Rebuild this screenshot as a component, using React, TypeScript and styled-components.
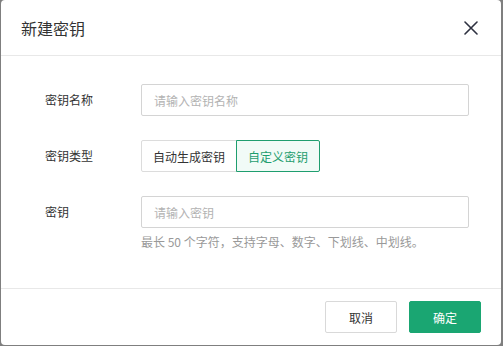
import styled, { createGlobalStyle } from 'styled-components'

const GlobalStyle = createGlobalStyle`
  html, body {
    margin: 0;
    padding: 0;
    background: #7f7f7f;
    font-family: "Noto Sans CJK SC", "Noto Sans", sans-serif;
  }
  * {
    box-sizing: border-box;
  }
`

const Backdrop = styled.div`
  width: 503px;
  height: 346px;
  padding-left: 1px;
  overflow: hidden;
`

const Modal = styled.div`
  width: 500px;
  height: 345px;
  background: #fff;
  border-radius: 4px;
  display: flex;
  flex-direction: column;
`

const Header = styled.div`
  height: 57px;
  padding: 0 20px;
  border-bottom: 1px solid #e8e8e8;
  display: flex;
  align-items: center;
  justify-content: space-between;
`

const Title = styled.h2`
  margin: 0;
  font-size: 16px;
  font-weight: 400;
  color: #333;
`

const CloseButton = styled.button`
  width: 16px;
  height: 16px;
  padding: 0;
  margin-right: 2px;
  border: none;
  background: none;
  display: flex;
  align-items: center;
  justify-content: center;
  cursor: pointer;
`

const Body = styled.div`
  padding: 28px 32px 38px 44px;
  display: flex;
  flex-direction: column;
  gap: 24px;
`

const Row = styled.div`
  display: flex;
  align-items: flex-start;
`

const Label = styled.div`
  width: 96px;
  height: 32px;
  line-height: 32px;
  font-size: 12px;
  color: #333;
`

const Field = styled.div`
  flex: 1;
  display: flex;
  flex-direction: column;
`

const Input = styled.input`
  width: 100%;
  height: 32px;
  padding: 0 12px;
  border: 1px solid #d4d4d4;
  border-radius: 2px;
  font-family: inherit;
  font-size: 12px;
  color: #333;
  outline: none;

  &::placeholder {
    color: #b3b3b3;
  }
`

const Hint = styled.div`
  margin-top: 6px;
  font-size: 12px;
  line-height: 16px;
  color: #999;
`

const Segmented = styled.div`
  display: flex;
`

const SegmentButton = styled.button<{ $active?: boolean }>`
  height: 32px;
  padding: 0 11px;
  font-family: inherit;
  font-size: 12px;
  border: 1px solid ${(p) => (p.$active ? '#1f9e6f' : '#dcdcdc')};
  background: ${(p) => (p.$active ? '#f1fbf7' : '#fff')};
  color: ${(p) => (p.$active ? '#1f9e6f' : '#333')};
  position: relative;
  z-index: ${(p) => (p.$active ? 1 : 0)};
  cursor: pointer;

  &:first-child {
    border-radius: 2px 0 0 2px;
  }

  &:last-child {
    margin-left: -1px;
    border-radius: 0 2px 2px 0;
  }
`

const Footer = styled.div`
  border-top: 1px solid #e8e8e8;
  padding: 12px 20px;
  display: flex;
  justify-content: flex-end;
  gap: 12px;
`

const FooterButton = styled.button<{ $primary?: boolean }>`
  width: 72px;
  height: 32px;
  border-radius: 2px;
  font-family: inherit;
  font-size: 12px;
  border: 1px solid ${(p) => (p.$primary ? '#1aa672' : '#d9d9d9')};
  background: ${(p) => (p.$primary ? '#1aa672' : '#fff')};
  color: ${(p) => (p.$primary ? '#fff' : '#333')};
  cursor: pointer;
`

const CloseIcon = () => (
  <svg width="14" height="14" viewBox="0 0 14 14">
    <path
      d="M1 1L13 13M13 1L1 13"
      stroke="#2e3140"
      strokeWidth="1.6"
      strokeLinecap="round"
    />
  </svg>
)

export default function App() {
  return (
    <>
      <GlobalStyle />
      <Backdrop>
        <Modal>
          <Header>
            <Title>新建密钥</Title>
            <CloseButton aria-label="关闭">
              <CloseIcon />
            </CloseButton>
          </Header>
          <Body>
            <Row>
              <Label>密钥名称</Label>
              <Field>
                <Input placeholder="请输入密钥名称" />
              </Field>
            </Row>
            <Row>
              <Label>密钥类型</Label>
              <Segmented>
                <SegmentButton>自动生成密钥</SegmentButton>
                <SegmentButton $active>自定义密钥</SegmentButton>
              </Segmented>
            </Row>
            <Row>
              <Label>密钥</Label>
              <Field>
                <Input placeholder="请输入密钥" />
                <Hint>最长 50 个字符，支持字母、数字、下划线、中划线。</Hint>
              </Field>
            </Row>
          </Body>
          <Footer>
            <FooterButton>取消</FooterButton>
            <FooterButton $primary>确定</FooterButton>
          </Footer>
        </Modal>
      </Backdrop>
    </>
  )
}
